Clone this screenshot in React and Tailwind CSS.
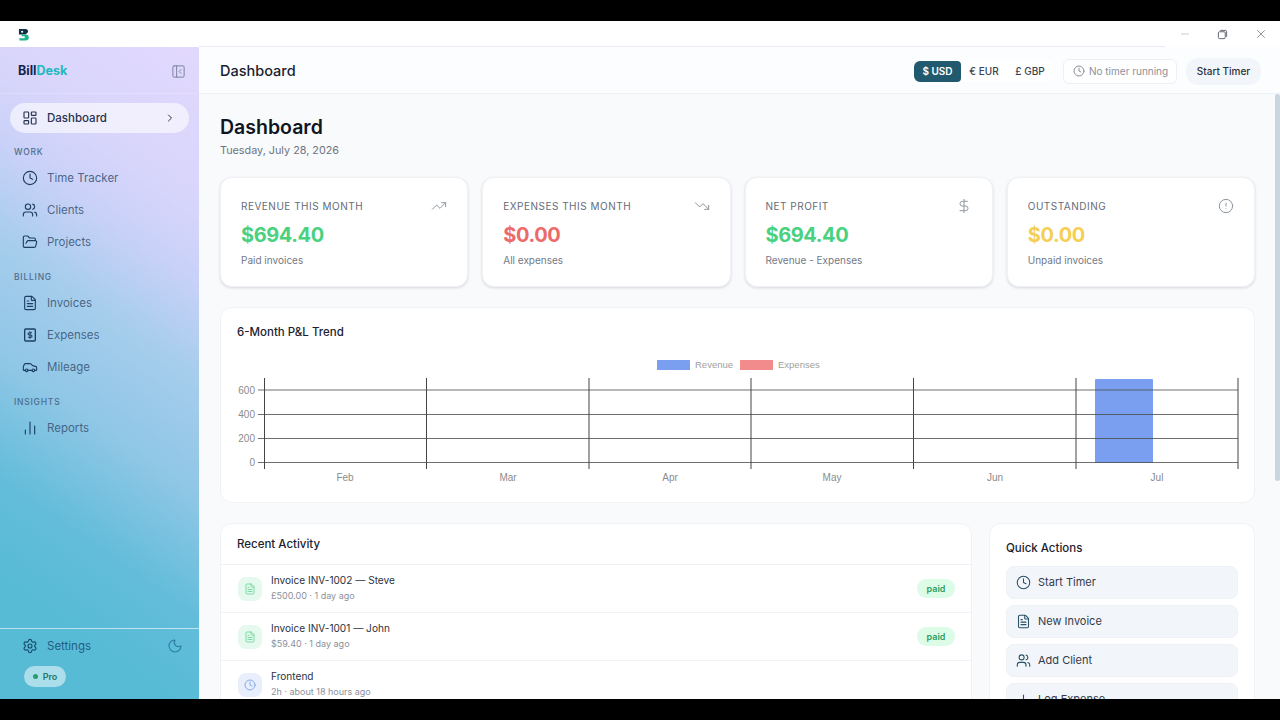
import {
  Car,
  ChartNoAxesColumn,
  ChevronRight,
  CircleAlert,
  Clock,
  DollarSign,
  FileText,
  FolderOpen,
  LayoutDashboard,
  Minus,
  Moon,
  PanelLeftClose,
  Plus,
  Settings,
  TrendingDown,
  TrendingUp,
  Users,
  X,
} from "lucide-react";

function ExpenseIcon({ className }) {
  return (
    <svg viewBox="0 0 24 24" fill="none" stroke="currentColor" strokeWidth="2" className={className}>
      <rect x="4" y="3" width="16" height="18" rx="1.5" />
      <path d="M15 8.5h-4.2a1.7 1.7 0 0 0 0 3.5h2.4a1.7 1.7 0 0 1 0 3.5H9M12 6.5v11" strokeWidth="1.6" />
    </svg>
  );
}

function RestoreIcon({ className }) {
  return (
    <svg viewBox="0 0 12 12" fill="none" stroke="currentColor" strokeWidth="1" className={className}>
      <rect x="1.5" y="3" width="7.5" height="7.5" rx="1.2" />
      <path d="M3.5 1.5h5.5a1.5 1.5 0 0 1 1.5 1.5v5.5" />
    </svg>
  );
}

function Logo() {
  return (
    <svg viewBox="0 0 12 14" className="h-[13px] w-[11px]">
      <path d="M1 1h7.5a2.5 2.5 0 0 1 1.6 4.4L8 7H1z" fill="#123044" />
      <path d="M4 7h4.5a3 3 0 0 1 0 6.5H1.5V11h5a1 1 0 0 0 0-2H4z" fill="#1fb58f" />
      <circle cx="4.5" cy="4" r="1.2" fill="#ffffff" />
    </svg>
  );
}

function NavItem({ icon: Icon, label }) {
  return (
    <div className="flex h-8 items-center gap-[9px] pl-[22px] text-[11.5px] text-[#3c5878]/90">
      <Icon className="h-4 w-4 text-[#1f3f62]" strokeWidth={1.7} />
      <span className="pt-[2px]">{label}</span>
    </div>
  );
}

function SectionLabel({ children }) {
  return (
    <div className="h-[29px] pl-3.5 pt-[13px] text-[8.5px] leading-3 font-medium tracking-[0.09em] text-[#4f6d8c]">
      {children}
    </div>
  );
}

function Sidebar() {
  return (
    <aside className="flex w-[199px] shrink-0 flex-col bg-[linear-gradient(215deg,#e2d8fd_0%,#d8d5fb_20%,#c8d1f8_30%,#a6cdec_42%,#8fc6e6_57%,#63bdda_72%,#58bbd6_85%)]">
      <div className="flex h-[47px] shrink-0 items-center justify-between border-b border-white/20 pl-[18px] pr-[13px] pt-[2px]">
        <div className="text-[12.5px] font-bold">
          <span className="text-[#14234a]">Bill</span>
          <span className="text-[#22b8bd]">Desk</span>
        </div>
        <PanelLeftClose className="h-[15px] w-[15px] text-[#7b84a0]" strokeWidth={1.6} />
      </div>
      <nav className="flex-1 pt-[9px]">
        <div className="mx-2.5 flex h-[30px] items-center gap-[9px] rounded-full bg-white/60 pl-3 pr-[13px] text-[11.5px] font-medium text-[#27324f]">
          <LayoutDashboard className="h-4 w-4" strokeWidth={1.7} />
          <span className="flex-1 pt-[2px]">Dashboard</span>
          <ChevronRight className="h-3 w-3" strokeWidth={2} />
        </div>
        <SectionLabel>WORK</SectionLabel>
        <NavItem icon={Clock} label="Time Tracker" />
        <NavItem icon={Users} label="Clients" />
        <NavItem icon={FolderOpen} label="Projects" />
        <SectionLabel>BILLING</SectionLabel>
        <NavItem icon={FileText} label="Invoices" />
        <NavItem icon={ExpenseIcon} label="Expenses" />
        <NavItem icon={Car} label="Mileage" />
        <SectionLabel>INSIGHTS</SectionLabel>
        <NavItem icon={ChartNoAxesColumn} label="Reports" />
      </nav>
      <div className="h-[71px] shrink-0 border-t border-white/60 pl-[22px] pr-4">
        <div className="flex h-[34px] items-center gap-[9px] text-[11.5px] text-[#1f5f82]">
          <Settings className="h-4 w-4 text-[#164a6c]" strokeWidth={1.7} />
          <span className="flex-1 pt-[2px]">Settings</span>
          <Moon className="h-4 w-4 text-[#2b7ba0]" strokeWidth={1.6} />
        </div>
        <div className="ml-[2px] mt-[3px] flex h-[21px] w-[42px] items-center justify-center gap-[5px] rounded-full bg-white/50 text-[9px] font-semibold text-[#1f7a66]">
          <span className="h-[5px] w-[5px] rounded-full bg-[#22a06b]" />
          Pro
        </div>
      </div>
    </aside>
  );
}

function Header() {
  return (
    <header className="flex h-[47px] shrink-0 items-center border-b border-[#eef1f5] bg-[#fcfdfe] pl-[21px] pr-[19px] pt-[2px]">
      <h2 className="flex-1 text-[14.5px] font-medium text-[#1a2130]">Dashboard</h2>
      <div className="flex h-[21px] items-center rounded-md bg-white text-[10px] font-medium text-[#3a4252]">
        <span className="flex h-full w-[47px] items-center justify-center rounded-l-md rounded-r-sm bg-[#215a6e] font-semibold text-white">
          $ USD
        </span>
        <span className="flex w-[46px] items-center justify-center">€ EUR</span>
        <span className="flex w-[46px] items-center justify-center">£ GBP</span>
      </div>
      <div className="ml-[10px] flex h-[25px] w-[114px] items-center gap-1 rounded-md border border-[#eef0f4] bg-white pl-[9px] text-[10px] text-[#8a909c]">
        <Clock className="h-3 w-3 text-[#7d8490]" strokeWidth={1.8} />
        No timer running
      </div>
      <div className="ml-[9px] flex h-[27px] w-[75px] items-center justify-center rounded-xl bg-[#f2f5f9] text-[10px] font-medium text-[#2a3140]">
        Start Timer
      </div>
    </header>
  );
}

function StatCard({ label, value, note, icon: Icon, color }) {
  return (
    <div className="h-[110px] rounded-xl border border-[#f0f2f5] bg-white px-5 pt-5 shadow-[0_1px_3px_rgba(15,23,42,0.14)]">
      <div className="flex h-4 items-center justify-between">
        <span className="text-[10px] tracking-[0.05em] text-[#656c78]">{label}</span>
        <Icon className="h-4 w-4 text-[#9097a1]" strokeWidth={1.5} />
      </div>
      <div className={`mt-[7px] text-[20px] leading-7 font-bold tracking-[-0.02em] ${color}`}>{value}</div>
      <div className="mt-[3px] text-[10px] leading-4 text-[#737986]">{note}</div>
    </div>
  );
}

function TrendChart() {
  const vertical = [264.5, 426.5, 589, 751, 913.5, 1076, 1238];
  const ticks = [
    [600, 390],
    [400, 414.5],
    [200, 438.5],
    [0, 462.5],
  ];
  const months = [
    ["Feb", 345],
    ["Mar", 508],
    ["Apr", 670],
    ["May", 832],
    ["Jun", 995],
    ["Jul", 1157],
  ];
  return (
    <svg viewBox="221 350 1033 140" className="h-[140px] w-[1033px]" fontFamily="'Liberation Sans', Arial, sans-serif" fontSize="10" fill="#8b8b8b">
      <rect x="657" y="360" width="33" height="10" fill="#7b9ff0" />
      <text x="695" y="368" fontSize="9.5" fill="#a0a0a0">Revenue</text>
      <rect x="740" y="360" width="33" height="10" fill="#f28b8b" />
      <text x="778" y="368" fontSize="9.5" fill="#a0a0a0">Expenses</text>
      <rect x="1095" y="379" width="58" height="84" rx="1" fill="#7b9ff0" />
      {ticks.map(([n, y]) => (
        <g key={n}>
          <line x1="258" x2="1238" y1={y} y2={y} stroke="#4b4b4b" strokeOpacity="0.8" />
          <text x="255" y={y + 3.5} textAnchor="end">{n}</text>
        </g>
      ))}
      {vertical.map((x) => (
        <line key={x} x1={x} x2={x} y1="378" y2="469" stroke="#444444" />
      ))}
      {months.map(([m, x]) => (
        <text key={m} x={x} y="481" textAnchor="middle">{m}</text>
      ))}
    </svg>
  );
}

function ActivityRow({ icon: Icon, tint, title, meta, paid }) {
  return (
    <div className="flex h-12 shrink-0 items-center border-b border-[#f1f3f6] pl-[17px] pr-4">
      <div className={`flex h-6 w-6 items-center justify-center rounded-lg ${tint}`}>
        <Icon className="h-3 w-3" strokeWidth={1.8} />
      </div>
      <div className="ml-[9px] -mt-px flex-1">
        <div className="text-[10.1px] leading-4 text-[#2d3340]">{title}</div>
        <div className="text-[9px] leading-4 text-[#8b919c]">{meta}</div>
      </div>
      {paid && (
        <span className="flex h-[19px] w-[38px] items-center justify-center rounded-full bg-[#dcfce7] text-[9px] font-semibold text-[#2f9e5f]">
          paid
        </span>
      )}
    </div>
  );
}

function QuickAction({ icon: Icon, label }) {
  return (
    <div className="flex h-[33px] items-center gap-[7px] rounded-lg border border-[#eef1f5] bg-[#f2f5f9] pl-[9px] text-[11px] text-[#343b4a]">
      <Icon className="h-[15px] w-[15px] text-[#2a5064]" strokeWidth={1.7} />
      {label}
    </div>
  );
}

export default function App() {
  return (
    <div className="flex h-screen flex-col overflow-hidden bg-black font-['Inter',sans-serif]">
      <div className="h-[21px] shrink-0" />
      <div className="flex h-[26px] shrink-0 bg-white">
        <div className="flex w-[199px] items-center pl-[18px]">
          <Logo />
        </div>
        <div className="flex-1 border-b border-[#e8ebef]" />
        <div className="flex w-[115px] items-center justify-between pl-[14px] pr-3 text-[#555b66]">
          <Minus className="h-3 w-3 text-[#a3a8b0]" strokeWidth={1.2} />
          <RestoreIcon className="h-[11px] w-[11px]" />
          <X className="h-3.5 w-3.5" strokeWidth={1.1} />
        </div>
      </div>
      <div className="flex min-h-0 flex-1">
        <Sidebar />
        <div className="relative flex min-w-0 flex-1 flex-col bg-[#f8fafc]">
          <Header />
          <main className="min-h-0 flex-1 overflow-hidden pl-[21px] pr-[25px] pt-[21px]">
            <h1 className="text-[19.5px] leading-6 font-semibold text-[#10151f]">Dashboard</h1>
            <p className="mt-1 text-[10.8px] leading-4 text-[#6d7480]">Tuesday, July 28, 2026</p>

            <div className="mt-[18px] grid grid-cols-4 gap-[14px]">
              <StatCard label="REVENUE THIS MONTH" value="$694.40" note="Paid invoices" icon={TrendingUp} color="text-[#4ad17f]" />
              <StatCard label="EXPENSES THIS MONTH" value="$0.00" note="All expenses" icon={TrendingDown} color="text-[#ec6a6a]" />
              <StatCard label="NET PROFIT" value="$694.40" note="Revenue - Expenses" icon={DollarSign} color="text-[#4ad17f]" />
              <StatCard label="OUTSTANDING" value="$0.00" note="Unpaid invoices" icon={CircleAlert} color="text-[#f5cf55]" />
            </div>

            <div className="mt-5 h-[196px] rounded-xl border border-[#f0f2f5] bg-white">
              <div className="pl-4 pt-4 text-[11.5px] leading-4 font-medium text-[#1c2230]">6-Month P&amp;L Trend</div>
              <div className="mt-[10px]">
                <TrendChart />
              </div>
            </div>

            <div className="mt-5 flex gap-[17px]">
              <div className="w-[752px] shrink-0 rounded-xl border border-[#f0f2f5] bg-white">
                <div className="flex h-[41px] items-center border-b border-[#eef0f4] pl-4 pt-[2px] text-[11.5px] font-medium text-[#1c2230]">
                  Recent Activity
                </div>
                <ActivityRow icon={FileText} tint="bg-[#e6f9ee] text-[#6fd79a]" title="Invoice INV-1002 — Steve" meta="£500.00 · 1 day ago" paid />
                <ActivityRow icon={FileText} tint="bg-[#e6f9ee] text-[#6fd79a]" title="Invoice INV-1001 — John" meta="$59.40 · 1 day ago" paid />
                <ActivityRow icon={Clock} tint="bg-[#e8eefc] text-[#7da4e0]" title="Frontend" meta="2h · about 18 hours ago" />
              </div>
              <div className="flex-1 rounded-xl border border-[#f0f2f5] bg-white px-4 pt-4">
                <div className="text-[11.5px] leading-4 font-medium text-[#1c2230]">Quick Actions</div>
                <div className="mt-[10px] flex flex-col gap-[6px]">
                  <QuickAction icon={Clock} label="Start Timer" />
                  <QuickAction icon={FileText} label="New Invoice" />
                  <QuickAction icon={Users} label="Add Client" />
                  <QuickAction icon={Plus} label="Log Expense" />
                </div>
              </div>
            </div>
          </main>
          {/* scrollbar thumb */}
          <div className="absolute right-0 top-[47px] h-[387px] w-[5px] rounded-full bg-[#c9d5df]" />
        </div>
      </div>
      <div className="h-[21px] shrink-0" />
    </div>
  );
}
